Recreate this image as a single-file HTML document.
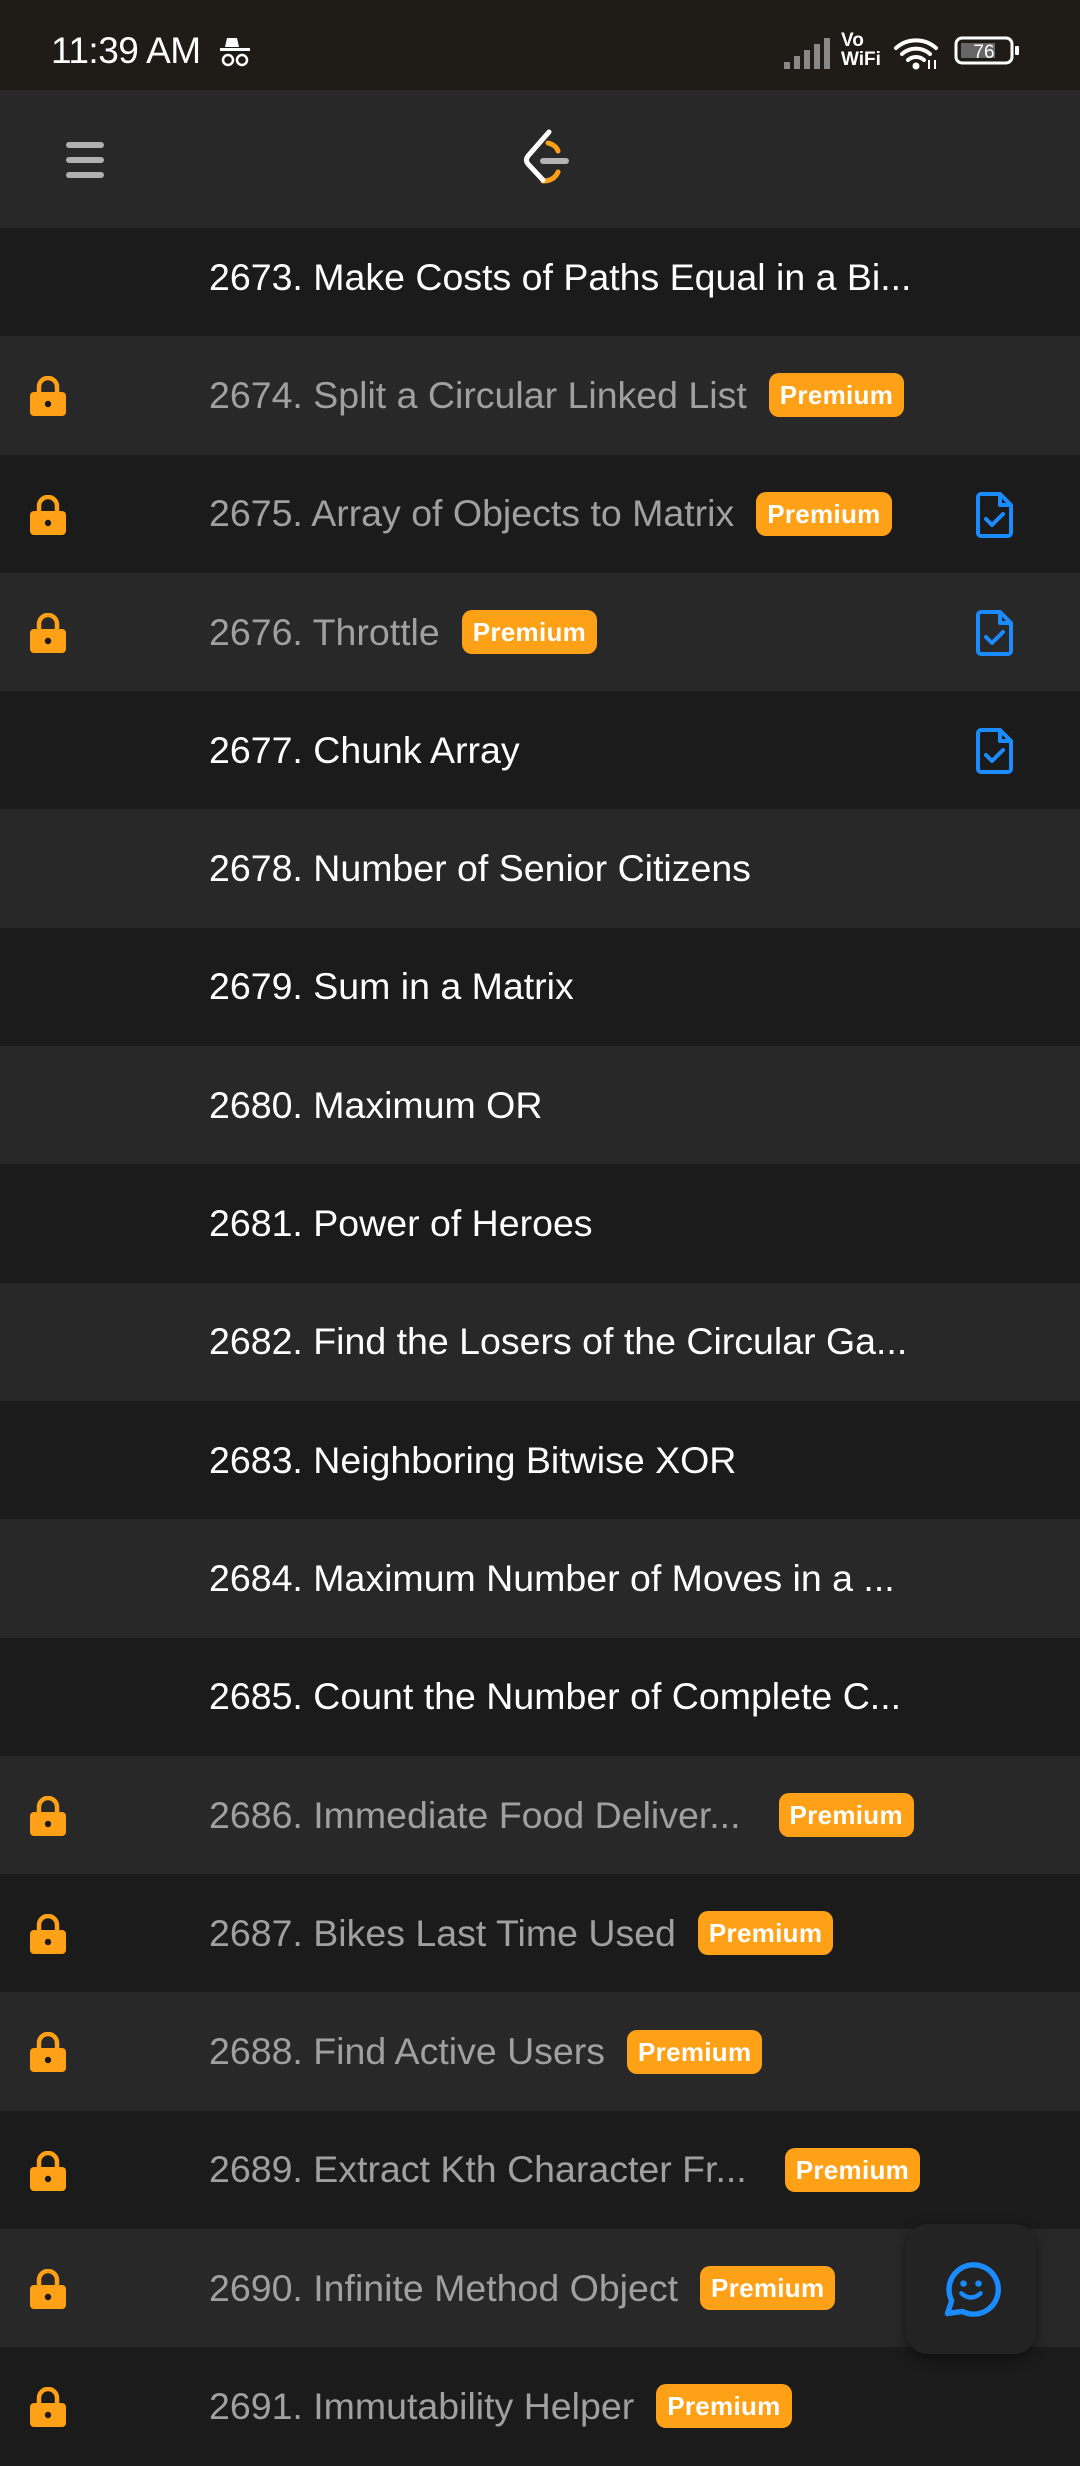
<!DOCTYPE html>
<html><head><meta charset="utf-8"><style>
*{margin:0;padding:0;box-sizing:border-box}
body{width:1080px;height:2400px;overflow:hidden;background:#1b1b1b;font-family:"Liberation Sans",sans-serif;position:relative}
.status{position:absolute;left:0;top:0;width:1080px;height:90px;background:#1f1c18;color:#fff;z-index:3}
.time{position:absolute;left:51px;top:30px;font-size:37px;letter-spacing:-0.5px}
.hdr{position:absolute;left:0;top:90px;width:1080px;height:138px;background:#282828;z-index:3}
.list{position:absolute;left:0;top:218px;width:1080px}
.row{height:118.3px;position:relative;display:flex;align-items:center}
.row:nth-child(odd){background:#1b1b1b}
.row:nth-child(even){background:#282828}
.t{position:absolute;left:209px;font-size:37.5px;color:#fff;white-space:nowrap;display:flex;align-items:center}
.p .t{color:#a0a0a0}
.b{display:inline-block;background:#ffa116;color:#fff;font-weight:bold;font-size:26px;border-radius:10px;height:44px;line-height:44px;padding:0 11px;margin-left:22px;letter-spacing:0.3px}
.lock{position:absolute;left:28px;top:40px}
.doc{position:absolute;left:975px;top:36px}
.fab{position:absolute;left:906px;top:2224px;width:130px;height:130px;background:#232323;border-radius:22px;box-shadow:0 4px 12px rgba(0,0,0,.5);z-index:4}
</style></head><body>
<div class="status">
<div class="time">11:39 AM</div>
<svg style="position:absolute;left:218px;top:36px" width="34" height="34" viewBox="0 0 34 34"><path d="M9 2h10l2 9H7z" fill="#fff"/><rect x="2" y="12" width="30" height="3" fill="#fff"/><circle cx="10" cy="24" r="5" fill="none" stroke="#fff" stroke-width="2.5"/><circle cx="24" cy="24" r="5" fill="none" stroke="#fff" stroke-width="2.5"/></svg>
<svg style="position:absolute;left:782px;top:36px" width="52" height="34"><rect x="2" y="26" width="6" height="7" fill="#888"/><rect x="12" y="20" width="6" height="13" fill="#888"/><rect x="22" y="14" width="6" height="19" fill="#888"/><rect x="32" y="8" width="6" height="25" fill="#888"/><rect x="42" y="2" width="6" height="31" fill="#888"/></svg>
<div style="position:absolute;left:841px;top:31px;font-size:19px;line-height:19px;color:#fff;font-weight:bold">Vo<br>WiFi</div>
<svg style="position:absolute;left:893px;top:36px" width="48" height="34" viewBox="0 0 48 34"><path d="M3 12a30 30 0 0 1 40 0M9 18a21 21 0 0 1 28 0M15 24a12 12 0 0 1 16 0" fill="none" stroke="#fff" stroke-width="4" stroke-linecap="round"/><circle cx="23" cy="30" r="3.5" fill="#fff"/><path d="M36 24v9M42 24v9" stroke="#fff" stroke-width="2"/></svg>
<svg style="position:absolute;left:954px;top:36px" width="70" height="30"><rect x="2" y="2" width="56" height="25" rx="6" fill="none" stroke="#fff" stroke-width="3"/><rect x="7" y="7" width="34" height="15" fill="#666"/><rect x="61" y="10" width="4" height="9" rx="1" fill="#fff"/><text x="30" y="22" fill="#fff" font-size="19" text-anchor="middle" font-family="Liberation Sans">76</text></svg>
</div>
<div class="hdr">
<svg style="position:absolute;left:66px;top:50px" width="40" height="40"><rect x="0" y="2" width="38" height="6" rx="3" fill="#b0b0b0"/><rect x="0" y="17" width="38" height="6" rx="3" fill="#b0b0b0"/><rect x="0" y="32" width="38" height="6" rx="3" fill="#b0b0b0"/></svg>
<svg style="position:absolute;left:500px;top:20px" width="90" height="90" viewBox="500 110 90 90"><path d="M548 143q8 2 10 8M558 172q-4 9 -15 9" fill="none" stroke="#ffa116" stroke-width="5" stroke-linecap="round"/><path d="M549 132l-21 24q-3 4 0 8l15 16" fill="none" stroke="#fff" stroke-width="5" stroke-linecap="round"/><path d="M543 161h23" stroke="#b3b3b3" stroke-width="6" stroke-linecap="round"/></svg>
</div>
<div class="list">
<div class="row"><div class="t">2673. Make Costs of Paths Equal in a Bi...</div></div>
<div class="row p"><div class="t">2674. Split a Circular Linked List<span class="b">Premium</span></div></div>
<div class="row p"><div class="t">2675. Array of Objects to Matrix<span class="b">Premium</span></div><D></D></div>
<div class="row p"><div class="t">2676. Throttle<span class="b">Premium</span></div><D></D></div>
<div class="row"><div class="t">2677. Chunk Array</div><D></D></div>
<div class="row"><div class="t">2678. Number of Senior Citizens</div></div>
<div class="row"><div class="t">2679. Sum in a Matrix</div></div>
<div class="row"><div class="t">2680. Maximum OR</div></div>
<div class="row"><div class="t">2681. Power of Heroes</div></div>
<div class="row"><div class="t">2682. Find the Losers of the Circular Ga...</div></div>
<div class="row"><div class="t">2683. Neighboring Bitwise XOR</div></div>
<div class="row"><div class="t">2684. Maximum Number of Moves in a ...</div></div>
<div class="row"><div class="t">2685. Count the Number of Complete C...</div></div>
<div class="row p"><div class="t">2686. Immediate Food Deliver...<span class="b" style="margin-left:38px">Premium</span></div></div>
<div class="row p"><div class="t">2687. Bikes Last Time Used<span class="b">Premium</span></div></div>
<div class="row p"><div class="t">2688. Find Active Users<span class="b">Premium</span></div></div>
<div class="row p"><div class="t">2689. Extract Kth Character Fr...<span class="b" style="margin-left:38px">Premium</span></div></div>
<div class="row p"><div class="t">2690. Infinite Method Object<span class="b">Premium</span></div></div>
<div class="row p"><div class="t">2691. Immutability Helper<span class="b">Premium</span></div></div>
</div>
<div class="fab"><svg style="position:absolute;left:35px;top:36px" width="60" height="60" viewBox="0 0 56 56"><path d="M6 50l4-12A23 23 0 1 1 20 48z" fill="none" stroke="#1a8cff" stroke-width="5" stroke-linejoin="round"/><circle cx="21" cy="22" r="3" fill="#1a8cff"/><circle cx="35" cy="22" r="3" fill="#1a8cff"/><path d="M19 31q9 8 18 0" fill="none" stroke="#1a8cff" stroke-width="4" stroke-linecap="round"/></svg></div>
<script>
var lock='<svg class="lock" width="40" height="40" viewBox="0 0 40 40"><path d="M11 18v-7a9 9 0 0 1 18 0v7" fill="none" stroke="#ffa116" stroke-width="4.5"/><rect x="2" y="16" width="36" height="24" rx="4" fill="#ffa116"/><circle cx="20" cy="28" r="3.2" fill="#1b1b1b"/></svg>';
var doc='<svg class="doc" width="40" height="48" viewBox="0 0 40 48"><path d="M6 3h19l11 11v28a3 3 0 0 1-3 3H6a3 3 0 0 1-3-3V6a3 3 0 0 1 3-3z" fill="none" stroke="#1a8cff" stroke-width="4" stroke-linejoin="round"/><path d="M25 3v11h11" fill="none" stroke="#1a8cff" stroke-width="4" stroke-linejoin="round"/><path d="M11 28l6 6 11-11" fill="none" stroke="#1a8cff" stroke-width="4" stroke-linecap="round" stroke-linejoin="round"/></svg>';
document.querySelectorAll('.row.p').forEach(function(r){r.insertAdjacentHTML('afterbegin',lock)});
document.querySelectorAll('D').forEach(function(d){d.outerHTML=doc});
</script>
</body></html>
